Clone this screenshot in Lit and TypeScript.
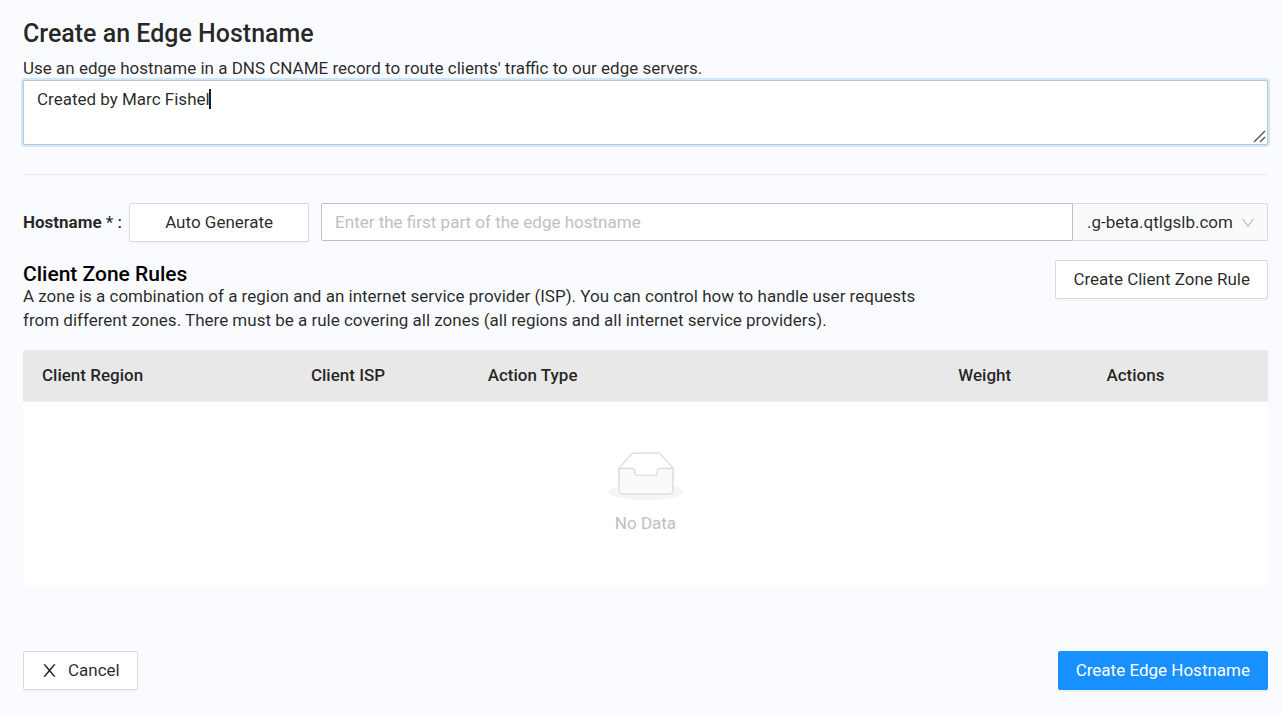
import { LitElement, html, css } from "lit";
import { customElement, state, query } from "lit/decorators.js";

@customElement("app-root")
export class AppRoot extends LitElement {
  @state() private columns = [
    { title: "Client Region", name: "region" },
    { title: "Client ISP", name: "isp" },
    { title: "Action Type", name: "action" },
    { title: "Weight", name: "weight" },
    { title: "Actions", name: "actions" },
  ];

  @query(".comment") private comment!: HTMLTextAreaElement;

  static styles = css`
    :host {
      display: block;
      box-sizing: border-box;
      min-height: 100vh;
      padding: 17px 14px 24px 23px;
      background: #fafbff;
      color: rgba(0, 0, 0, 0.85);
      font-family: Roboto, "Liberation Sans", sans-serif;
      font-size: 17px;
      line-height: 24px;
    }
    * {
      box-sizing: border-box;
    }
    h1,
    h2,
    p {
      margin: 0;
      font-weight: 500;
    }
    h1 {
      margin-bottom: 6px;
      font-size: 25px;
      line-height: 33px;
    }
    h2 {
      color: #000;
      font-size: 21px;
      line-height: 24px;
      padding-top: 2px;
      margin-bottom: -2px;
    }
    p {
      font-weight: 400;
    }
    button,
    input,
    select,
    textarea {
      margin: 0;
      font: inherit;
      color: inherit;
    }
    .comment-box {
      position: relative;
      display: flex;
    }
    .comment {
      width: 100%;
      height: 65px;
      padding: 6px 13px;
      border: 1px solid #bfc4cc;
      border-radius: 2px;
      outline: none;
      background: #fff;
      box-shadow: 0 0 0 2px #cfe7ff;
      resize: vertical;
      caret-color: transparent;
    }
    .comment::-webkit-resizer {
      background: transparent;
    }
    .caret {
      position: absolute;
      top: 9px;
      left: 186px;
      width: 2px;
      height: 20px;
      background: #1f1f1f;
      pointer-events: none;
    }
    .grip {
      position: absolute;
      right: 2px;
      bottom: 2px;
      pointer-events: none;
    }
    hr {
      width: 100%;
      height: 1px;
      margin: 29px 0 28px;
      border: 0;
      background: #e8eaed;
    }
    .host-row {
      display: flex;
      align-items: flex-start;
      margin-bottom: 18px;
    }
    .host-label {
      margin-right: 7px;
      line-height: 38px;
      font-weight: 700;
    }
    .mark {
      font-weight: 500;
    }
    .btn {
      display: inline-flex;
      align-items: center;
      justify-content: center;
      height: 39px;
      padding: 0 17px 1px;
      border: 1px solid #d9d9d9;
      border-radius: 2px;
      background: #fff;
      box-shadow: 0 2px 0 rgba(0, 0, 0, 0.02);
      white-space: nowrap;
      cursor: pointer;
    }
    .generate {
      width: 180px;
      margin-right: 12px;
    }
    .primary {
      border-color: #1890ff;
      background: #1890ff;
      color: #fff;
      box-shadow: 0 2px 0 rgba(0, 0, 0, 0.045);
    }
    .cancel {
      gap: 10px;
    }
    .group {
      display: flex;
      flex: 1;
      height: 38px;
    }
    .host-input {
      flex: 1;
      min-width: 0;
      padding: 0 13px;
      border: 1px solid #bfbfc2;
      border-radius: 2px 0 0 2px;
      background: #fff;
    }
    .host-input::placeholder {
      color: #bfbfbf;
      opacity: 1;
    }
    .suffix {
      position: relative;
      display: flex;
      width: 195px;
    }
    .suffix select {
      width: 100%;
      padding: 0 30px 0 14px;
      border: 1px solid #d9d9d9;
      border-left: 0;
      border-radius: 0 2px 2px 0;
      background: #fafafa;
      appearance: none;
    }
    .suffix svg {
      position: absolute;
      top: 13px;
      right: 13px;
      pointer-events: none;
    }
    .rules {
      display: flex;
      align-items: flex-start;
      justify-content: space-between;
      gap: 24px;
      margin-bottom: 18px;
    }
    .rules-text {
      max-width: 900px;
    }
    table {
      width: 100%;
      border-collapse: separate;
      border-spacing: 0;
      table-layout: fixed;
      background: #fff;
      border-radius: 2px;
    }
    th {
      height: 52px;
      padding: 0 19px 1px;
      border-bottom: 1px solid #efefef;
      background: #e8e8e8;
      font-weight: 500;
      text-align: left;
    }
    th:first-child {
      border-top-left-radius: 2px;
    }
    th:last-child {
      border-top-right-radius: 2px;
    }
    .region {
      width: 21.6%;
    }
    .isp {
      width: 14.2%;
    }
    .action {
      width: 37.8%;
    }
    .weight {
      width: 11.9%;
    }
    .empty {
      height: 184px;
      padding: 0 0 1px;
      color: #bfbfbf;
      text-align: center;
    }
    .empty svg {
      display: block;
      margin: 0 auto 11px;
    }
    footer {
      display: flex;
      justify-content: space-between;
      margin-top: 65px;
    }
  `;

  firstUpdated() {
    this.comment.focus();
  }

  render() {
    return html`
      <h1>Create an Edge Hostname</h1>
      <p id="intro">Use an edge hostname in a DNS CNAME record to route clients' traffic to our edge servers.</p>
      <div class="comment-box">
        <textarea class="comment" aria-labelledby="intro" .value=${"Created by Marc Fishel"}></textarea>
        <span class="caret"></span>
        <svg class="grip" width="13" height="13" viewBox="0 0 13 13" aria-hidden="true">
          <path d="M1 12L12 1M7 12L12 7" fill="none" stroke="#505050" stroke-width="1.400" />
        </svg>
      </div>
      <hr />
      <div class="host-row">
        <label class="host-label" for="hostname">Hostname <span class="mark">* :</span></label>
        <button class="btn generate" type="button">Auto Generate</button>
        <div class="group">
          <input id="hostname" class="host-input" type="text" placeholder="Enter the first part of the edge hostname" />
          <div class="suffix">
            <select aria-label="Hostname suffix">
              <option>.g-beta.qtlgslb.com</option>
            </select>
            <svg width="14" height="14" viewBox="64 64 896 896" fill="#bfbfbf" aria-hidden="true">
              <path d="M884 256h-75c-5.100 0-9.900 2.500-12.900 6.600L512 654.200 227.900 262.600c-3-4.100-7.800-6.600-12.900-6.600h-75c-6.500 0-10.300 7.400-6.500 12.700l352.600 486.100c12.800 17.600 39 17.600 51.700 0l352.600-486.100c3.900-5.300.1-12.700-6.400-12.700z" />
            </svg>
          </div>
        </div>
      </div>
      <div class="rules">
        <div class="rules-text">
          <h2>Client Zone Rules</h2>
          <p>
            A zone is a combination of a region and an internet service provider (ISP). You can control how to handle
            user requests from different zones. There must be a rule covering all zones (all regions and all internet
            service providers).
          </p>
        </div>
        <button class="btn" type="button">Create Client Zone Rule</button>
      </div>
      <table>
        <thead>
          <tr>
            ${this.columns.map((c) => html`<th class=${c.name} scope="col">${c.title}</th>`)}
          </tr>
        </thead>
        <tbody>
          <tr>
            <td class="empty" colspan="5">
              <svg width="76" height="48" viewBox="0 0 64 41" aria-hidden="true">
                <g transform="translate(0 1)" fill="none" fill-rule="evenodd">
                  <ellipse fill="#f5f5f5" cx="32" cy="33" rx="32" ry="7" />
                  <g fill-rule="nonzero" stroke="#d9d9d9">
                    <path fill="#fff" d="M55 12.760L44.854 1.258C44.367.474 43.656 0 42.907 0H21.093c-.749 0-1.460.474-1.947 1.257L9 12.761V22h46v-9.240z" />
                    <path d="M41.613 15.931c0-1.605.994-2.930 2.227-2.931H55v18.137C55 33.260 53.680 35 52.050 35h-40.100C10.320 35 9 33.259 9 31.137V13h11.160c1.233 0 2.227 1.323 2.227 2.928v.022c0 1.605 1.005 2.901 2.237 2.901h14.752c1.232 0 2.237-1.308 2.237-2.913v-.007z" fill="#fafafa" />
                  </g>
                </g>
              </svg>
              No Data
            </td>
          </tr>
        </tbody>
      </table>
      <footer>
        <button class="btn cancel" type="button">
          <svg width="17" height="17" viewBox="64 64 896 896" fill="currentColor" aria-hidden="true">
            <path d="M563.800 512l262.500-312.900c4.400-5.200.7-13.100-6.100-13.100h-79.800c-4.700 0-9.200 2.100-12.300 5.700L511.600 449.800 295.100 191.700c-3-3.600-7.500-5.700-12.300-5.700H203c-6.800 0-10.500 7.900-6.100 13.100L459.400 512 196.900 824.900A7.950 7.950 0 0 0 203 838h79.800c4.700 0 9.200-2.100 12.300-5.700l216.500-258.100 216.500 258.100c3 3.600 7.500 5.700 12.300 5.700h79.800c6.800 0 10.500-7.900 6.100-13.100L563.800 512z" />
          </svg>
          Cancel
        </button>
        <button class="btn primary" type="button">Create Edge Hostname</button>
      </footer>
    `;
  }
}
